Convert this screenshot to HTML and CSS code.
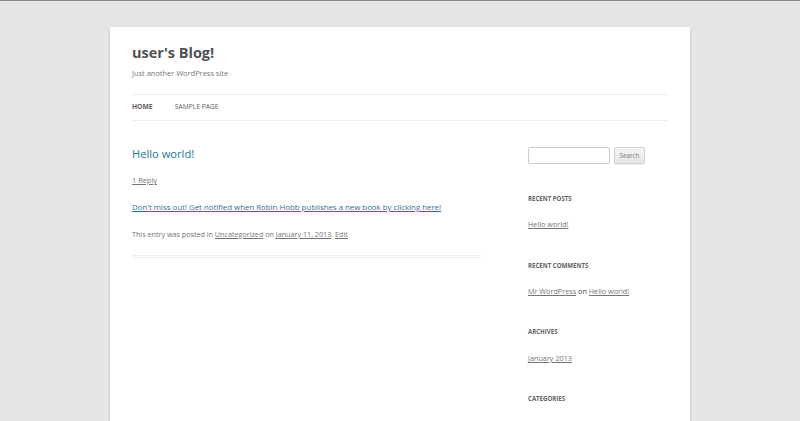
FILE: index.html
```html
<!DOCTYPE html>
<html lang="en">
<head>
<meta charset="utf-8">
<title>user's Blog!</title>
<link rel="stylesheet" href="styles.css">
</head>
<body>
<div class="site">
  <header class="site-header">
    <h1 class="site-title">user's Blog!</h1>
    <p class="site-description">Just another WordPress site</p>
    <nav class="main-nav">
      <a class="nav-item current" href="#">Home</a>
      <a class="nav-item" href="#">Sample Page</a>
    </nav>
  </header>
  <div class="wrapper">
    <main class="site-content">
      <article class="post">
        <header class="entry-header">
          <h2 class="entry-title"><a href="#">Hello world!</a></h2>
          <div class="comments-link"><a href="#">1 Reply</a></div>
        </header>
        <div class="entry-content">
          <p><a href="#">Don't miss out! Get notified when Robin Hobb publishes a new book by clicking here!</a></p>
        </div>
        <footer class="entry-meta">This entry was posted in <a href="#">Uncategorized</a> on <a href="#">January 11, 2013</a>. <a href="#">Edit</a></footer>
      </article>
    </main>
    <aside class="widget-area">
      <div class="widget search-widget">
        <form class="search-form">
          <input class="search-input" type="text">
          <button class="search-btn" type="button">Search</button>
        </form>
      </div>
      <div class="widget">
        <h3 class="widget-title">Recent Posts</h3>
        <ul class="widget-list"><li><a href="#">Hello world!</a></li></ul>
      </div>
      <div class="widget">
        <h3 class="widget-title">Recent Comments</h3>
        <ul class="widget-list"><li><a href="#">Mr WordPress</a> on <a href="#">Hello world!</a></li></ul>
      </div>
      <div class="widget">
        <h3 class="widget-title">Archives</h3>
        <ul class="widget-list"><li><a href="#">January 2013</a></li></ul>
      </div>
      <div class="widget">
        <h3 class="widget-title">Categories</h3>
      </div>
    </aside>
  </div>
</div>
</body>
</html>
```
FILE: styles.css
```css
html, body {
  margin: 0;
  padding: 0;
}
body {
  background: #e6e6e6;
  border-top: 1px solid #8c8c8c;
  font-family: "Open Sans", "DejaVu Sans", sans-serif;
  color: #444;
  font-size: 7.8px;
  line-height: 13.4px;
  overflow: hidden;
  height: 420px;
}
a {
  color: #21759b;
}
.site {
  width: 536px;
  padding: 0 22px;
  margin: 26px auto 0;
  background: #fff;
  box-shadow: 0 1px 3px rgba(100, 100, 100, 0.3);
  min-height: 500px;
}
.site-header {
  padding-top: 13.4px;
}
.site-title {
  margin: 0;
  font-size: 14.5px;
  line-height: 26.8px;
  font-weight: 700;
  color: #515151;
}
.site-description {
  margin: 0;
  font-size: 7.45px;
  line-height: 13.4px;
  color: #757575;
}
.main-nav {
  margin-top: 13.4px;
  border-top: 1px solid #ededed;
  border-bottom: 1px solid #ededed;
  display: flex;
  gap: 22.3px;
}
.nav-item {
  font-size: 6.7px;
  line-height: 24.7px;
  text-transform: uppercase;
  color: #5e5e5e;
  text-decoration: none;
}
.nav-item.current {
  color: #636363;
  font-weight: 700;
}
.wrapper {
  display: flex;
  justify-content: space-between;
  padding-top: 13.4px;
}
.site-content {
  width: 349px;
  margin-top: 13.4px;
}
.post {
  border-bottom: 3px double #ededed;
  padding-bottom: 13.4px;
}
.entry-header {
  margin-bottom: 13.4px;
}
.entry-title {
  margin: 0;
  font-size: 11.15px;
  line-height: 13.4px;
  font-weight: 400;
}
.entry-title a {
  text-decoration: none;
}
.comments-link {
  margin-top: 13.4px;
  font-size: 7.4px;
  line-height: 13.4px;
}
.comments-link a,
.entry-meta a {
  color: #757575;
}
.entry-content p {
  margin: 0 0 13.4px;
  font-size: 7.85px;
  line-height: 13.4px;
}
.entry-meta {
  font-size: 7.2px;
  line-height: 13.4px;
  color: #757575;
}
.widget-area {
  width: 140px;
  margin-top: 13.4px;
}
.widget {
  margin-bottom: 26.7px;
  font-size: 7.25px;
  line-height: 13.4px;
}
.widget a {
  color: #757575;
}
.search-form {
  display: flex;
  gap: 4px;
  height: 17.5px;
}
.search-input {
  box-sizing: border-box;
  width: 82px;
  height: 17px;
  border: 1px solid #ccc;
  border-radius: 2px;
  padding: 3px;
  margin: 0;
  font-family: inherit;
}
.search-btn {
  box-sizing: border-box;
  width: 31px;
  height: 17px;
  padding: 0;
  margin: 0;
  font-family: inherit;
  font-size: 6.3px;
  color: #7c7c7c;
  background: linear-gradient(#f4f4f4, #e6e6e6);
  border: 1px solid #d2d2d2;
  border-radius: 2px;
  box-shadow: 0 1px 1px rgba(64, 64, 64, 0.1);
}
.widget-title {
  margin: 0 0 13.4px;
  font-size: 6.1px;
  line-height: 13.4px;
  font-weight: 700;
  text-transform: uppercase;
  color: #636363;
}
.widget-list {
  list-style: none;
  margin: 0;
  padding: 0;
}
```
